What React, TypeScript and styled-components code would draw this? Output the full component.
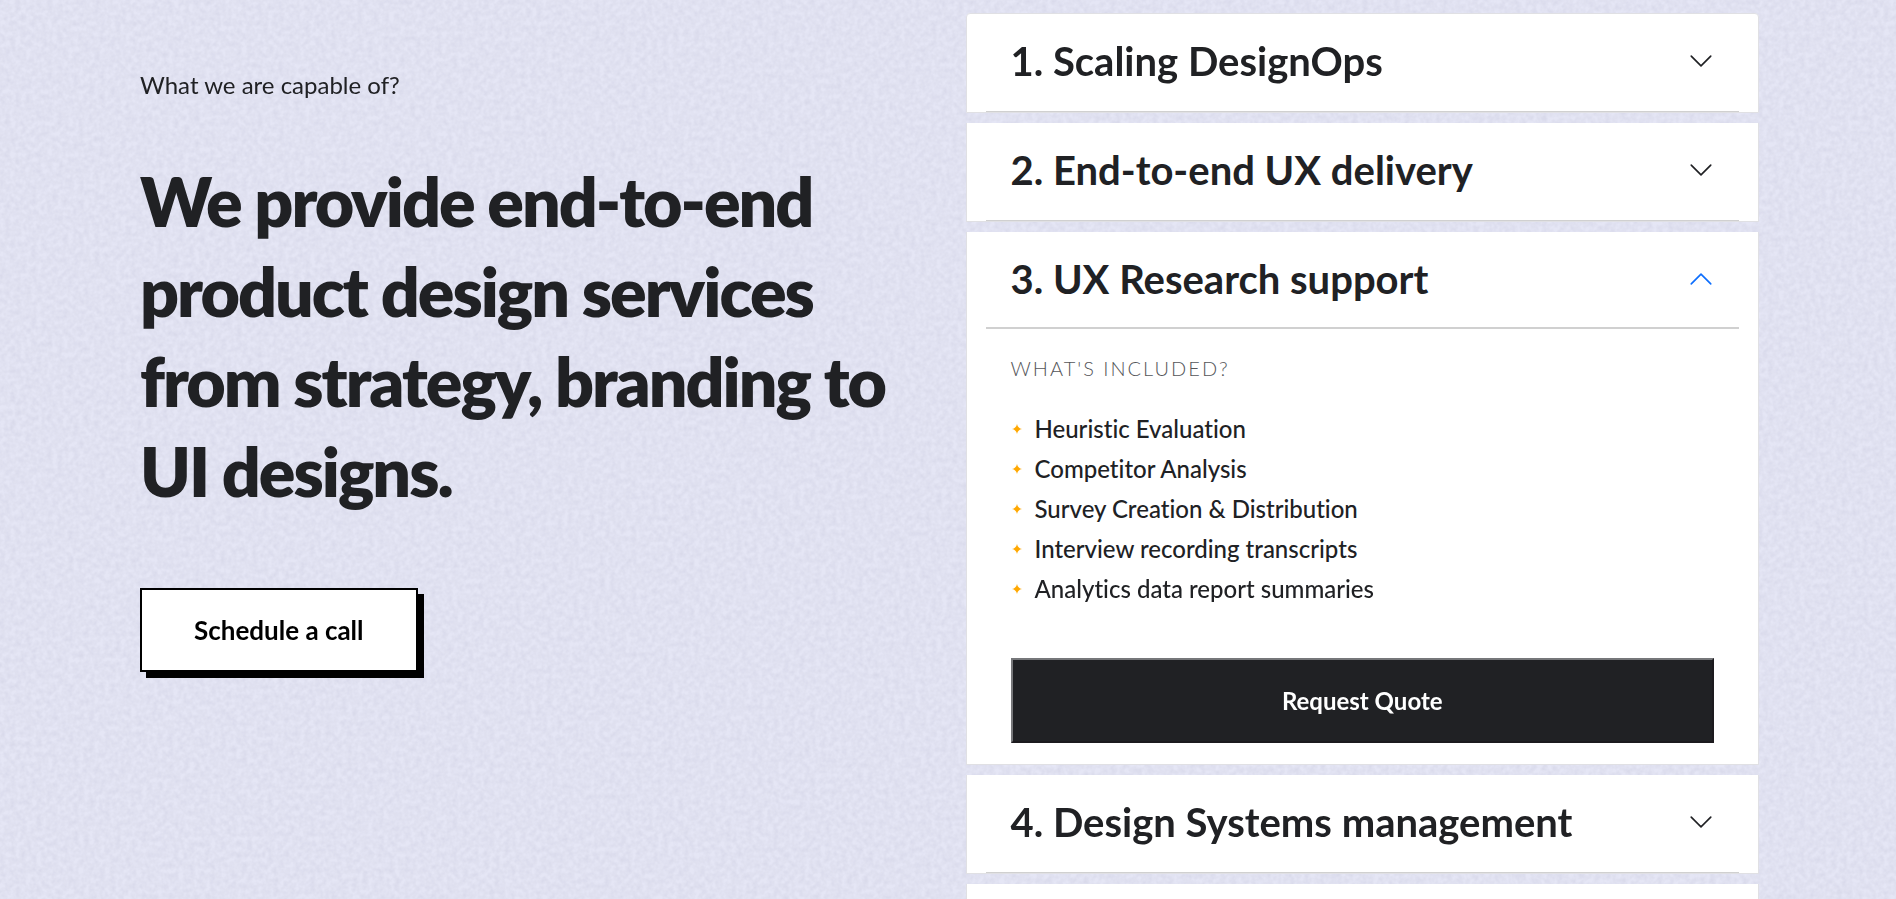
import React, { useState } from 'react';
import styled, { createGlobalStyle } from 'styled-components';

const ink = '#202124';

const GlobalStyle = createGlobalStyle`
  *, *::before, *::after { box-sizing: border-box; }
  body {
    margin: 0;
    background: #e5e6f5;
    color: ${ink};
    font-family: Lato, "Liberation Sans", sans-serif;
    font-variant-ligatures: none;
  }
  h2, h3, p, ul { margin: 0; padding: 0; }
  button { font-family: inherit; cursor: pointer; }
`;

const Paper = styled.svg`
  position: fixed;
  inset: 0;
  width: 100%;
  height: 100%;
  z-index: -1;
`;

const Page = styled.main`
  display: grid;
  grid-template-columns: 1fr 1fr;
  column-gap: 32px;
  height: 100vh;
  overflow: hidden;
  padding: 0 137px 0 140px;
`;

const Intro = styled.section`
  display: flex;
  flex-direction: column;
  align-items: flex-start;
  padding-top: 67px;
`;

const Eyebrow = styled.p`
  font-size: 24px;
  line-height: 36px;
`;

const Heading = styled.h2`
  margin-top: 53px;
  font-size: 68px;
  font-weight: 800;
  line-height: 90px;
  letter-spacing: -2px;
`;

const CallButton = styled.button`
  margin-top: 72px;
  height: 84px;
  padding: 0 52px;
  border: 2px solid #000;
  background: #fff;
  box-shadow: 6px 6px 0 #000;
  color: #000;
  font-size: 26px;
  font-weight: 700;
`;

const Services = styled.section`
  display: flex;
  flex-direction: column;
  gap: 10px;
  padding-top: 13px;
`;

const Card = styled.article`
  flex-shrink: 0;
  min-height: 99px;
  border: 1px solid #e0e0e4;
  border-top: 0;
  background: #fff;

  &:first-child {
    border-top: 1px solid #e0e0e4;
    border-radius: 4px 4px 0 0;
  }
`;

const CardTitle = styled.h3`
  margin: 0 19px;
`;

const Toggle = styled.button<{ $open: boolean }>`
  display: flex;
  justify-content: space-between;
  align-items: center;
  width: 100%;
  padding: ${({ $open }) => ($open ? '23px 25px 24px' : '23px 25px 26px')};
  border: 0;
  border-bottom: ${({ $open }) => ($open ? 2 : 1)}px solid #d0d0d0;
  background: none;
  color: ${ink};
  font-size: 40px;
  font-weight: 700;
  line-height: 48px;
  text-align: left;
`;

const Chevron = styled.svg<{ $open: boolean }>`
  width: 26px;
  height: 26px;
  fill: none;
  stroke: ${({ $open }) => ($open ? '#0d6efd' : ink)};
  stroke-width: 1;
  stroke-linecap: round;
  stroke-linejoin: round;
  transform: ${({ $open }) => ($open ? 'rotate(180deg)' : 'none')};
`;

const CardBody = styled.div`
  display: flex;
  flex-direction: column;
  padding: 24px 44px 21px;
`;

const Label = styled.p`
  color: #55565a;
  font-size: 20px;
  font-weight: 300;
  line-height: 30px;
  letter-spacing: 2px;
  text-transform: uppercase;
`;

const Included = styled.ul`
  margin-top: 26px;
  list-style: none;
`;

const IncludedItem = styled.li`
  display: flex;
  align-items: center;
  gap: 12px;
  font-size: 24px;
  font-weight: 500;
  line-height: 40px;
`;

const Star = styled.svg`
  width: 12px;
  height: 12px;
  fill: #ffa800;
`;

const QuoteButton = styled.button`
  margin-top: 49px;
  height: 85px;
  border: 2px solid;
  border-color: #76777a #1c1a1e #1c1a1e #76777a;
  background: ${ink};
  color: #fff;
  font-size: 24px;
  font-weight: 700;
`;

type Service = { title: string; included?: string[] };

const services: Service[] = [
  { title: '1. Scaling DesignOps' },
  { title: '2. End-to-end UX delivery' },
  {
    title: '3. UX Research support',
    included: [
      'Heuristic Evaluation',
      'Competitor Analysis',
      'Survey Creation & Distribution',
      'Interview recording transcripts',
      'Analytics data report summaries',
    ],
  },
  { title: '4. Design Systems management' },
];

function PaperTexture() {
  return (
    <Paper aria-hidden="true">
      <filter id="grain" x="0" y="0" width="100%" height="100%" colorInterpolationFilters="sRGB">
        <feTurbulence type="fractalNoise" baseFrequency="0.19" numOctaves="2" seed="4" />
        <feColorMatrix values="0 0 0 0 0.62  0 0 0 0 0.62  0 0 0 0 0.72  0.28 0 0 0 -0.08" />
      </filter>
      <rect width="100%" height="100%" filter="url(#grain)" />
    </Paper>
  );
}

export default function App() {
  const [open, setOpen] = useState(2);

  return (
    <>
      <GlobalStyle />
      <PaperTexture />
      <Page>
        <Intro>
          <Eyebrow>What we are capable of?</Eyebrow>
          <Heading>
            We provide end-to-end product design services from strategy, branding to UI designs.
          </Heading>
          <CallButton type="button">Schedule a call</CallButton>
        </Intro>
        <Services>
          {services.map(({ title, included }, index) => {
            const isOpen = open === index;
            return (
              <Card key={title}>
                <CardTitle>
                  <Toggle
                    type="button"
                    $open={isOpen}
                    aria-expanded={isOpen}
                    onClick={() => setOpen(isOpen ? -1 : index)}
                  >
                    {title}
                    <Chevron $open={isOpen} viewBox="0 0 16 16" aria-hidden="true">
                      <path d="M2 5l6 6 6-6" />
                    </Chevron>
                  </Toggle>
                </CardTitle>
                {isOpen && included && (
                  <CardBody>
                    <Label>What's included?</Label>
                    <Included>
                      {included.map((item) => (
                        <IncludedItem key={item}>
                          <Star viewBox="0 0 12 12" aria-hidden="true">
                            <path d="M6 1Q6.800 5.200 11 6Q6.800 6.800 6 11Q5.200 6.800 1 6Q5.200 5.200 6 1Z" />
                          </Star>
                          {item}
                        </IncludedItem>
                      ))}
                    </Included>
                    <QuoteButton type="button">Request Quote</QuoteButton>
                  </CardBody>
                )}
              </Card>
            );
          })}
          <Card />
        </Services>
      </Page>
    </>
  );
}
